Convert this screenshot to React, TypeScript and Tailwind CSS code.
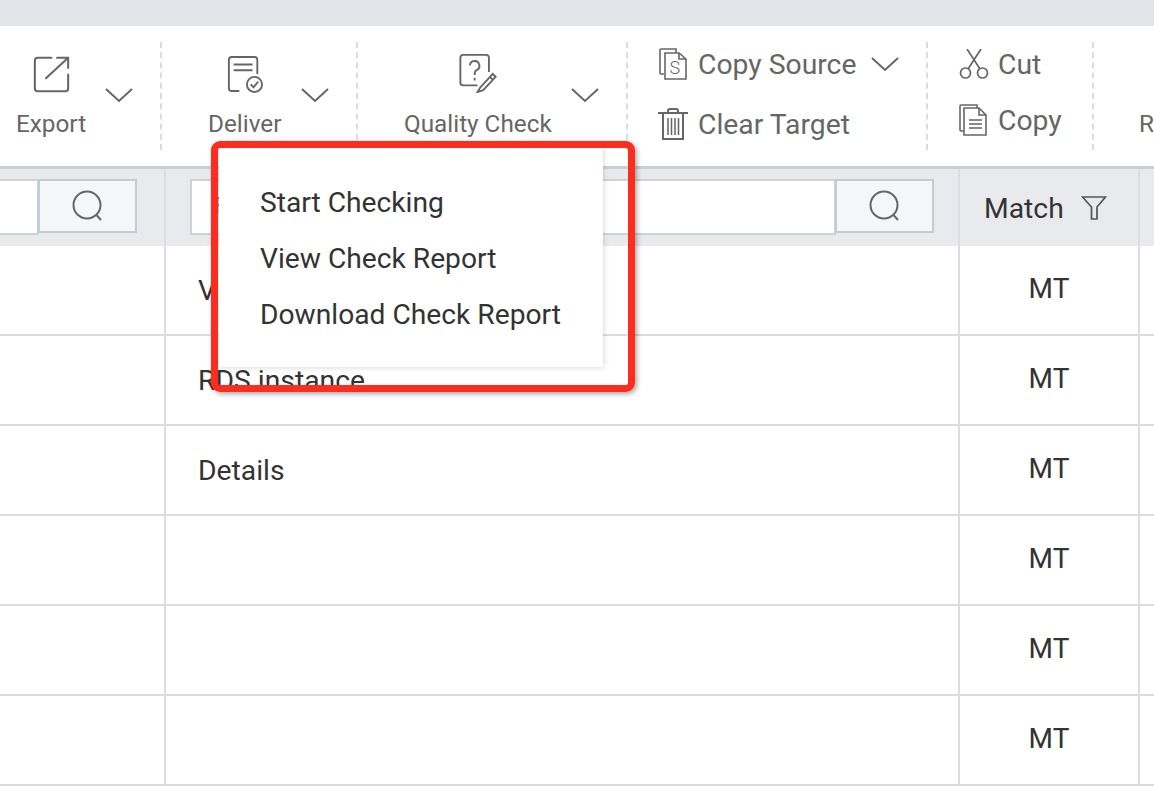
import type { ReactNode } from 'react'

const ROWS = [
  { text: 'V' },
  { text: 'RDS instance' },
  { text: 'Details' },
  { text: '' },
  { text: '' },
  { text: '' },
]

function Chevron() {
  return (
    <svg width="30" height="16" viewBox="0 0 30 16" fill="none" stroke="#666" strokeWidth="2" className="shrink-0">
      <path d="M2 2 L15 14 L28 2" />
    </svg>
  )
}

function SearchIcon() {
  return (
    <svg width="34" height="34" viewBox="0 0 34 34" fill="none" stroke="#666" strokeWidth="2">
      <circle cx="16" cy="16" r="13.5" />
      <path d="M25.5 26 L30 31" />
    </svg>
  )
}

function ExportIcon() {
  return (
    <svg width="37" height="37" viewBox="0 0 40 40" fill="none" stroke="#666" strokeWidth="2.2" strokeLinecap="round">
      <path d="M20 2 H5 a3 3 0 0 0 -3 3 V35 a3 3 0 0 0 3 3 H35 a3 3 0 0 0 3 -3 V20" />
      <path d="M14 24 L38 2 M26 2 H38 V13" />
    </svg>
  )
}

function DeliverIcon() {
  return (
    <svg width="36" height="38" viewBox="0 0 38 40" fill="none" stroke="#666" strokeWidth="2">
      <path d="M13 38 H5 a3 3 0 0 1 -3 -3 V5 a3 3 0 0 1 3 -3 H29 a3 3 0 0 1 3 3 V20" />
      <path d="M7 10 H27 M7 16 H27" />
      <circle cx="29" cy="31" r="8" />
      <path d="M25 31 L28 34 L33 28" />
    </svg>
  )
}

function QualityIcon() {
  return (
    <svg width="39" height="40" viewBox="0 0 40 42" fill="none" stroke="#666" strokeWidth="2">
      <path d="M20 34 H5 a3 3 0 0 1 -3 -3 V5 a3 3 0 0 1 3 -3 H29 a3 3 0 0 1 3 3 V20" />
      <path d="M12 13 a5 5 0 1 1 7 5 c-2 1 -2 2 -2 5 M17 26 V29" />
      <path d="M23 36 L36 22 L39 25 L26 39 L20 41 Z M33 25 L36 28" />
    </svg>
  )
}

function SourceIcon() {
  return (
    <svg width="28" height="32" viewBox="0 0 28 32" fill="none" stroke="#666" strokeWidth="1.6">
      <path d="M5 26 H2 a1 1 0 0 1 -1 -1 V2 a1 1 0 0 1 1 -1 H17 V5" />
      <path d="M6 5 H20 L27 11 V31 H6 Z M20 5 V11 H27" />
      <text x="10.5" y="26" fontSize="18" fill="#666" stroke="none" fontFamily="Roboto, sans-serif" fontWeight="300">S</text>
    </svg>
  )
}

function TrashIcon() {
  return (
    <svg width="32" height="32" viewBox="0 0 32 32" fill="none" stroke="#666" strokeWidth="2">
      <path d="M1 5 H31 M11 5 V3 a2 2 0 0 1 2 -2 H19 a2 2 0 0 1 2 2 V5" />
      <path d="M6 5 V31 H26 V5" />
      <path d="M11 10 V27 M14.5 10 V27 M18 10 V27 M21.5 10 V27" strokeWidth="1.5" />
    </svg>
  )
}

function ScissorsIcon() {
  return (
    <svg width="30" height="30" viewBox="0 0 30 30" fill="none" stroke="#666" strokeWidth="1.7">
      <circle cx="6.5" cy="24" r="5" />
      <circle cx="23.5" cy="24" r="5" />
      <path d="M9 20 L22 0 M21 20 L8 0" />
    </svg>
  )
}

function CopyIcon() {
  return (
    <svg width="28" height="32" viewBox="0 0 28 32" fill="none" stroke="#666" strokeWidth="1.6">
      <path d="M5 27 H2 a1 1 0 0 1 -1 -1 V2 a1 1 0 0 1 1 -1 H18 V4" />
      <path d="M5 4 H20 L27 11 V31 H5 Z M20 4 V11 H27" />
      <path d="M10 16 H23 M10 20 H23 M10 24 H23" />
    </svg>
  )
}

function FilterIcon() {
  return (
    <svg width="26" height="26" viewBox="0 0 26 26" fill="none" stroke="#555" strokeWidth="1.7">
      <path d="M1.5 2 H24.5 L16 12 V24 H10.5 V12 Z" />
    </svg>
  )
}

function BigTool({ icon, label, className, chevronGap }: { icon: ReactNode; label: string; className: string; chevronGap: string }) {
  return (
    <div className={`my-[16px] flex h-[108px] shrink-0 items-start border-r-2 border-dashed border-[#dcdcdc] ${className}`}>
      <div className="flex flex-col items-center">
        <div className="flex h-[51px] items-end justify-center">{icon}</div>
        <div className="mt-[15px] h-[32px] text-[24.3px] leading-[32px] text-[#666]">{label}</div>
      </div>
      <div className={`mt-[45px] ${chevronGap}`}>
        <Chevron />
      </div>
    </div>
  )
}

function SearchBox({ inputClass, children }: { inputClass: string; children?: ReactNode }) {
  return (
    <div className="flex h-[56px] items-start">
      <div className={`h-[56px] border-2 border-[#cfd1d8] bg-white ${inputClass}`}>{children}</div>
      <div className="-ml-[1px] flex h-[54px] w-[99px] items-center justify-center border-2 border-[#c8cad1] bg-[#f5f6f8]">
        <SearchIcon />
      </div>
    </div>
  )
}

export default function App() {
  return (
    <div className="relative h-[794px] w-[1154px] overflow-hidden bg-white font-['Roboto',sans-serif]">
      <div className="h-[26px] bg-[#e3e4e9]" />

      {/* toolbar */}
      <div className="flex h-[143px] border-b-[3px] border-[#cdcfd5] bg-white">
        <BigTool icon={<ExportIcon />} label="Export" className="w-[162px] pl-[16px]" chevronGap="ml-[18px]" />
        <BigTool icon={<DeliverIcon />} label="Deliver" className="w-[196px] pl-[46px]" chevronGap="ml-[19px]" />
        <BigTool icon={<QualityIcon />} label="Quality Check" className="w-[270px] pl-[46px]" chevronGap="ml-[18px]" />

        <div className="my-[16px] flex h-[108px] w-[300px] shrink-0 flex-col border-r-2 border-dashed border-[#dcdcdc] pl-[31px] text-[#666]">
          <div className="flex h-[44px] items-center">
            <SourceIcon />
            <span className="ml-[11px] mt-[2px] text-[28.3px] leading-[44px]">Copy Source</span>
            <span className="ml-[14px]"><Chevron /></span>
          </div>
          <div className="mt-[16px] flex h-[44px] items-center">
            <span className="-ml-[2px]"><TrashIcon /></span>
            <span className="ml-[9px] mt-[2px] text-[28.3px] leading-[44px]">Clear Target</span>
          </div>
        </div>

        <div className="my-[16px] flex h-[108px] w-[166px] shrink-0 flex-col border-r-2 border-dashed border-[#dcdcdc] pl-[31px] text-[#666]">
          <div className="flex h-[44px] items-center">
            <ScissorsIcon />
            <span className="ml-[9px] mt-[2px] text-[28.3px] leading-[44px]">Cut</span>
          </div>
          <div className="mt-[12px] flex h-[44px] items-center">
            <CopyIcon />
            <span className="ml-[11px] mt-[2px] text-[28.3px] leading-[44px]">Copy</span>
          </div>
        </div>

        <div className="flex flex-1 items-end overflow-hidden pb-[26px] pl-[45px] text-[24.3px] leading-[32px] text-[#666]">R</div>
      </div>

      {/* table header */}
      <div className="grid h-[77px] grid-cols-[166px_794px_180px_1fr] border-b border-[#e9eaee] bg-[#e9eaee]">
        <div className="border-r-2 border-[#dcdde2] pt-[10px]">
          <SearchBox inputClass="w-[39px] border-l-0" />
        </div>
        <div className="border-r-2 border-[#dcdde2] pl-[24px] pt-[10px]">
          <SearchBox inputClass="w-[646px] pl-[22px] text-[24px] leading-[50px] text-[#888]">F</SearchBox>
        </div>
        <div className="flex items-center border-r-2 border-[#dcdde2] pl-[24px] pt-[4px]">
          <span className="text-[28.3px] text-[#333]">Match</span>
          <span className="-mt-[2px] ml-[17px]"><FilterIcon /></span>
        </div>
        <div />
      </div>

      {/* table rows */}
      {ROWS.map((row, i) => (
        <div key={i} className="grid h-[90px] grid-cols-[166px_794px_180px_1fr] border-b-2 border-[#dcdcdc] text-[28.3px] text-[#333]">
          <div className="border-r-2 border-[#dcdcdc]" />
          <div className="flex items-center border-r-2 border-[#dcdcdc] pl-[32px] pt-[2px]">{row.text}</div>
          <div className="flex items-center justify-center border-r-2 border-[#dcdcdc] pb-[2px] text-[28px]">MT</div>
          <div />
        </div>
      ))}

      {/* dropdown menu */}
      <div className="absolute left-[219px] top-[147px] flex h-[220px] w-[384px] flex-col bg-white pl-[41px] pt-[28px] text-[28.2px] leading-[56px] text-[#333] shadow-[0_0_6px_rgba(0,0,0,0.2)]">
        <div>Start Checking</div>
        <div>View Check Report</div>
        <div>Download Check Report</div>
      </div>

      {/* red highlight */}
      <div className="absolute left-[211px] top-[141px] h-[251px] w-[424px] rounded-[9px] border-[7px] border-[#fb2d1f] shadow-[2px_2px_5px_rgba(0,0,0,0.35)]" />
    </div>
  )
}
